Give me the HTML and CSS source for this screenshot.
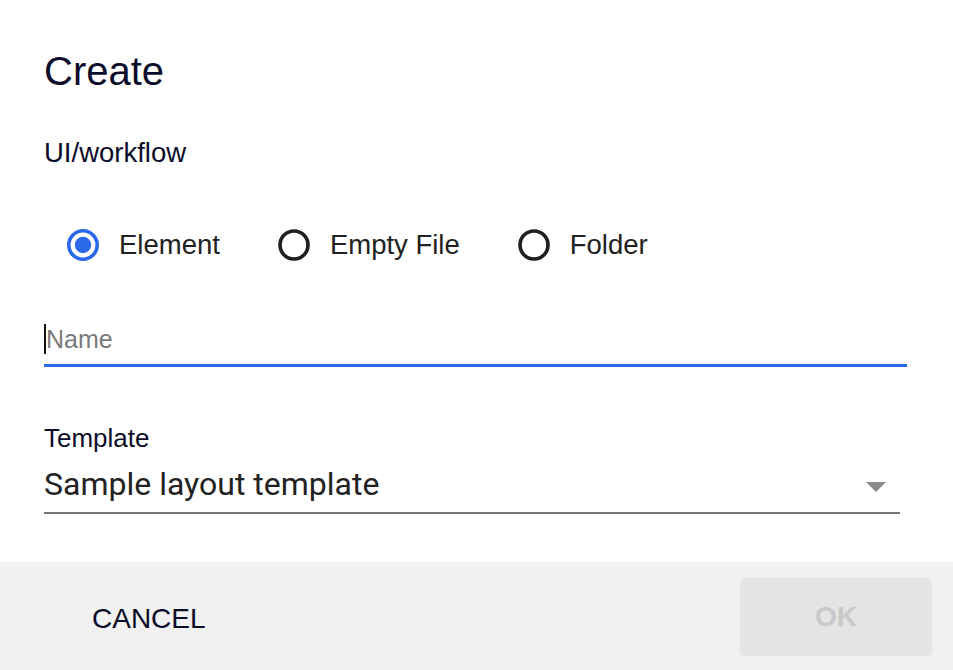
FILE: index.html
```html
<!DOCTYPE html>
<html>
<head>
<meta charset="utf-8">
<link rel="stylesheet" href="styles.css">
</head>
<body>
<div class="dialog">
  <div class="content">
    <h1 class="title">Create</h1>
    <div class="path">UI/workflow</div>
    <div class="radios">
      <label class="radio">
        <svg class="radio-icon" width="32" height="32" viewBox="0 0 32 32"><circle cx="16" cy="16" r="14.2" fill="none" stroke="#2a6ae9" stroke-width="3.6"/><circle cx="16" cy="16" r="8.2" fill="#2a6ae9"/></svg>
        <span class="radio-label">Element</span>
      </label>
      <label class="radio">
        <svg class="radio-icon" width="32" height="32" viewBox="0 0 32 32"><circle cx="16" cy="16" r="14" fill="none" stroke="#1f1f1f" stroke-width="3.6"/></svg>
        <span class="radio-label">Empty File</span>
      </label>
      <label class="radio">
        <svg class="radio-icon" width="32" height="32" viewBox="0 0 32 32"><circle cx="16" cy="16" r="14" fill="none" stroke="#1f1f1f" stroke-width="3.6"/></svg>
        <span class="radio-label">Folder</span>
      </label>
    </div>
    <div class="name-field">
      <span class="cursor"></span><span class="placeholder">Name</span>
    </div>
    <div class="select-field">
      <div class="select-label">Template</div>
      <div class="select-box">
        <span class="select-value">Sample layout template</span>
        <svg class="select-arrow" width="20" height="10" viewBox="0 0 20 10"><polygon points="0,0 20,0 10,10" fill="#8a8a8a"/></svg>
      </div>
    </div>
  </div>
  <div class="footer">
    <button class="btn-cancel">CANCEL</button>
    <button class="btn-ok" disabled>OK</button>
  </div>
</div>
</body>
</html>
```

FILE: styles.css
```css
* { box-sizing: border-box; }
html, body { margin: 0; padding: 0; background: #ffffff; }
body { font-family: "Liberation Sans", Arial, sans-serif; }

.dialog {
  width: 953px;
  height: 670px;
  display: flex;
  flex-direction: column;
  overflow: hidden;
}

.content {
  padding: 47px 46px 0 44px;
  display: flex;
  flex-direction: column;
}

.title {
  margin: 0;
  font-size: 40px;
  line-height: 48px;
  font-weight: normal;
  color: #0b0c2a;
}

.path {
  margin-top: 42px;
  font-size: 27.5px;
  line-height: 32px;
  color: #0b0c2a;
}

.radios {
  margin-top: 60px;
  padding-left: 23px;
  display: flex;
  align-items: center;
  gap: 58px;
}

.radio {
  display: flex;
  align-items: center;
  gap: 20px;
  height: 32px;
}

.radio-icon { display: block; flex: none; }

.radio-label {
  font-size: 27.5px;
  line-height: 32px;
  color: #222222;
}

.name-field {
  margin-top: 63px;
  display: flex;
  align-items: stretch;
  height: 43px;
  padding-bottom: 10px;
  border-bottom: 3px solid #2a6ae9;
}

.cursor {
  width: 2px;
  background: #111111;
  flex: none;
}

.placeholder {
  font-size: 25px;
  line-height: 30px;
  color: #7a7a7a;
}

.select-field {
  margin-top: 56px;
  margin-right: 7px;
}

.select-label {
  font-size: 26px;
  line-height: 30px;
  color: #0b0c2a;
}

.select-box {
  margin-top: 12px;
  display: flex;
  align-items: flex-start;
  justify-content: space-between;
  padding-bottom: 9px;
  border-bottom: 2px solid #777777;
}

.select-value {
  font-family: Roboto, "Liberation Sans", sans-serif;
  font-size: 32px;
  line-height: 38px;
  color: #222222;
}

.select-arrow {
  display: block;
  margin-top: 17px;
  margin-right: 14px;
}

.footer {
  margin-top: auto;
  height: 108px;
  background: #f1f1f1;
  display: flex;
  align-items: center;
  justify-content: space-between;
  padding: 16px 21px 14px 92px;
}

.btn-cancel {
  border: none;
  background: transparent;
  padding: 4px 0 0 0;
  font-family: "Liberation Sans", Arial, sans-serif;
  font-size: 28px;
  color: #0b0c2a;
}

.btn-ok {
  width: 192px;
  height: 78px;
  border: none;
  border-radius: 5px;
  background: #e4e4e4;
  font-family: "Liberation Sans", Arial, sans-serif;
  font-size: 28px;
  font-weight: bold;
  color: #c9c9c9;
}
```
